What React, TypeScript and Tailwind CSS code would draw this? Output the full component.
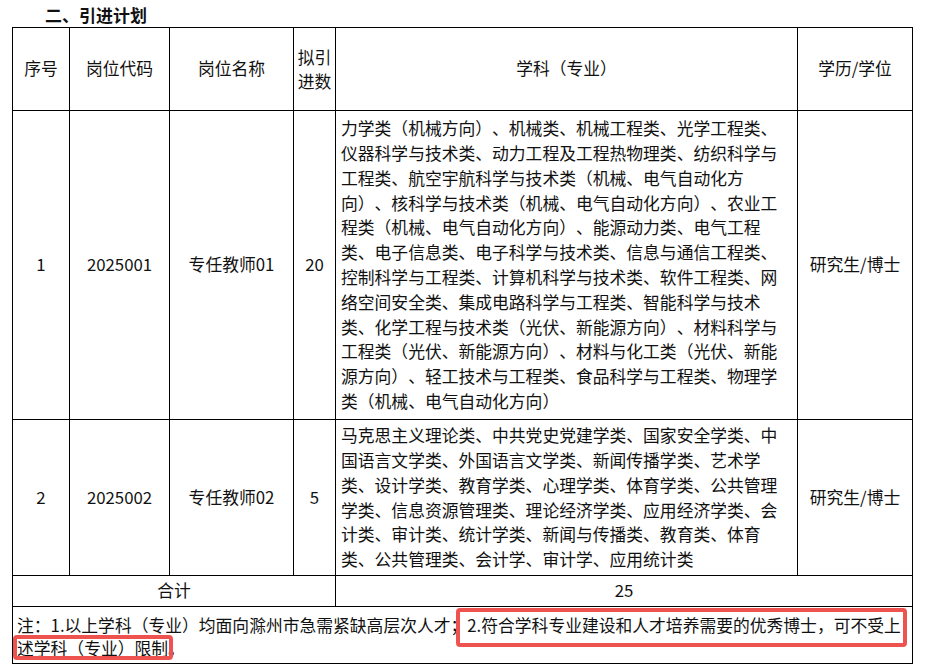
const font = { fontFamily: '"Noto Sans CJK SC", "Noto Sans", sans-serif' }

const row1 = [
  '力学类（机械方向）、机械类、机械工程类、光学工程类、',
  '仪器科学与技术类、动力工程及工程热物理类、纺织科学与',
  '工程类、航空宇航科学与技术类（机械、电气自动化方',
  '向）、核科学与技术类（机械、电气自动化方向）、农业工',
  '程类（机械、电气自动化方向）、能源动力类、电气工程',
  '类、电子信息类、电子科学与技术类、信息与通信工程类、',
  '控制科学与工程类、计算机科学与技术类、软件工程类、网',
  '络空间安全类、集成电路科学与工程类、智能科学与技术',
  '类、化学工程与技术类（光伏、新能源方向）、材料科学与',
  '工程类（光伏、新能源方向）、材料与化工类（光伏、新能',
  '源方向）、轻工技术与工程类、食品科学与工程类、物理学',
  '类（机械、电气自动化方向）',
]

const row2 = [
  '马克思主义理论类、中共党史党建学类、国家安全学类、中',
  '国语言文学类、外国语言文学类、新闻传播学类、艺术学',
  '类、设计学类、教育学类、心理学类、体育学类、公共管理',
  '学类、信息资源管理类、理论经济学类、应用经济学类、会',
  '计类、审计类、统计学类、新闻与传播类、教育类、体育',
  '类、公共管理类、会计学、审计学、应用统计类',
]

const rows = [
  { no: '1', code: '2025001', name: '专任教师01', count: '20', lines: row1, h: 'h-[309px]' },
  { no: '2', code: '2025002', name: '专任教师02', count: '5', lines: row2, h: 'h-[156px]' },
]

const cell = 'border border-black text-center align-middle'

export default function App() {
  return (
    <div className="min-h-screen bg-white text-[#111] [text-spacing-trim:space-all]" style={font}>
      <div className="h-[27px] pl-[45px] pt-[1px] text-[17px] font-bold leading-[27px]">二、引进计划</div>
      <div className="pl-[12px]">
        <table className="w-[901px] table-fixed border-collapse text-[16.8px]">
          <colgroup>
            <col className="w-[57px]" />
            <col className="w-[100px]" />
            <col className="w-[124px]" />
            <col className="w-[42px]" />
            <col className="w-[462px]" />
            <col className="w-[115px]" />
          </colgroup>
          <tbody>
            <tr className="h-[83px]">
              <td className={cell}>序号</td>
              <td className={cell}>岗位代码</td>
              <td className={cell}>岗位名称</td>
              <td className={cell + ' leading-[24px]'}>
                <div>拟引</div>
                <div>进数</div>
              </td>
              <td className={cell}>学科（专业）</td>
              <td className={cell}>学历/学位</td>
            </tr>
            {rows.map((r) => (
              <tr key={r.no} className={r.h}>
                <td className={cell}>{r.no}</td>
                <td className={cell}>{r.code}</td>
                <td className={cell}>{r.name}</td>
                <td className={cell}>{r.count}</td>
                <td className="border border-black px-[5px] text-left align-middle leading-[24.8px]">
                  {r.lines.map((l) => (
                    <div key={l} className="whitespace-nowrap">
                      {l}
                    </div>
                  ))}
                </td>
                <td className={cell}>研究生/博士</td>
              </tr>
            ))}
            <tr className="h-[31px]">
              <td colSpan={4} className={cell}>
                合计
              </td>
              <td colSpan={2} className={cell}>
                25
              </td>
            </tr>
            <tr className="h-[56px]">
              <td colSpan={6} className="relative border border-black px-[4px] pt-[7px] pb-[3px] text-left align-top text-[16.8px] leading-[23px]">
                <div className="whitespace-nowrap">
                  注：1.以上学科（专业）均面向滁州市急需紧缺高层次人才；2.符合学科专业建设和人才培养需要的优秀博士，可不受上
                </div>
                <div className="whitespace-nowrap">述学科（专业）限制。</div>
                <div className="absolute left-[443px] top-[1px] h-[39px] w-[451px] rounded-[4px] border-[4px] border-[#ef5350]" />
                <div className="absolute left-0 top-[28px] h-[25px] w-[160px] rounded-[4px] border-[4px] border-[#ef5350]" />
              </td>
            </tr>
          </tbody>
        </table>
      </div>
      <div className="pl-[45px] pt-[3px] text-[17px] font-bold leading-[27px]">三、引进条件</div>
    </div>
  )
}
